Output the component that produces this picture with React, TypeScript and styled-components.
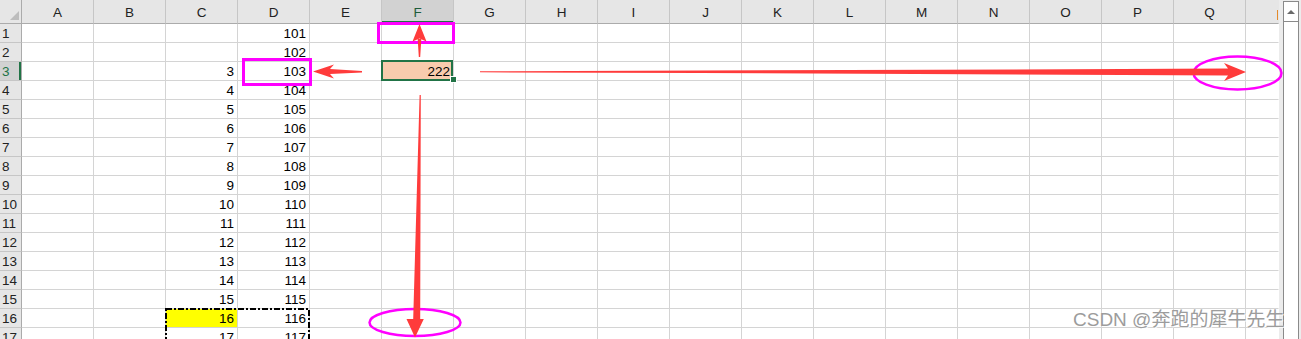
import React from 'react';
import styled, { createGlobalStyle, css } from 'styled-components';

const GlobalStyle = createGlobalStyle`
  html, body { margin: 0; padding: 0; background: #fff; }
  body { overflow: hidden; font-family: "Liberation Sans", Arial, sans-serif; }
`;

const COLS = 'ABCDEFGHIJKLMNOPQ'.split('');
const ROWS = Array.from({ length: 17 }, (_, i) => i + 1);
const GREEN = '#217346';

const Sheet = styled.div`
  position: relative;
  display: flex;
  width: 1301px;
  height: 339px;
  overflow: hidden;
`;

const Grid = styled.div`
  flex: none;
  width: 1279px;
  display: grid;
  grid-template-columns: 22px repeat(17, 72px) 33px;
  grid-template-rows: 24px;
  grid-auto-rows: 19px;
  align-content: start;
`;

const Corner = styled.div`
  position: relative;
  box-sizing: border-box;
  background: #e6e6e6;
  border-right: 1px solid #ababab;
  border-bottom: 1px solid #ababab;
  &::after {
    content: '';
    position: absolute;
    right: 2px;
    bottom: 3px;
    width: 0;
    height: 0;
    border-left: 9px solid transparent;
    border-bottom: 9px solid #bdbdbd;
  }
`;

const ColHeader = styled.div<{ $active?: boolean; $edge?: boolean }>`
  position: relative;
  box-sizing: border-box;
  background: ${(p) => (p.$active ? '#d2d2d2' : '#e6e6e6')};
  border-right: 1px solid ${(p) => (p.$edge ? 'transparent' : '#c6c6c6')};
  border-bottom: 1px solid #ababab;
  text-align: center;
  font-size: 13.5px;
  line-height: 26px;
  color: ${(p) => (p.$active ? '#1d5c3a' : '#222')};
  ${(p) =>
    p.$active &&
    css`
      box-shadow: inset 0 -2px 0 ${GREEN};
    `}
  ${(p) =>
    p.$edge &&
    css`
      &::after {
        content: '';
        position: absolute;
        right: 0;
        top: 10px;
        width: 1px;
        height: 10px;
        background: #e48a2a;
      }
    `}
`;

const RowHeader = styled.div<{ $active?: boolean }>`
  box-sizing: border-box;
  background: ${(p) => (p.$active ? '#d2d2d2' : '#e6e6e6')};
  border-right: 1px solid #ababab;
  border-bottom: 1px solid #c6c6c6;
  padding-left: 2px;
  font-size: 13.5px;
  line-height: 20px;
  color: ${(p) => (p.$active ? GREEN : '#222')};
  overflow: hidden;
  ${(p) =>
    p.$active &&
    css`
      box-shadow: inset -2px 0 0 ${GREEN};
    `}
`;

const Cell = styled.div<{ $fill?: string; $selected?: boolean; $edge?: boolean }>`
  position: relative;
  box-sizing: border-box;
  background: ${(p) => p.$fill || '#fff'};
  border-right: 1px solid ${(p) => (p.$edge ? 'transparent' : '#d4d4d4')};
  border-bottom: 1px solid #d4d4d4;
  padding-right: 3px;
  text-align: right;
  font-size: 13.5px;
  line-height: 20px;
  color: #000;
  white-space: nowrap;
  ${(p) =>
    p.$selected &&
    css`
      z-index: 1;
      &::before {
        content: '';
        position: absolute;
        left: -1px;
        top: -2px;
        right: 0;
        bottom: -1px;
        border: 2px solid ${GREEN};
      }
      &::after {
        content: '';
        position: absolute;
        right: -4px;
        bottom: -3px;
        width: 5px;
        height: 5px;
        background: ${GREEN};
        border: 1px solid #fff;
      }
    `}
`;

const ScrollArea = styled.div`
  flex: 1;
  display: flex;
  box-sizing: border-box;
  padding: 1px 2px 0 4px;
  background: #ececec;
`;

const Track = styled.div`
  flex: 1;
  display: flex;
  flex-direction: column;
  border: 1px solid #8a8a8a;
  border-bottom: none;
  background: #fff;
`;

const UpButton = styled.div`
  height: 19px;
  border-bottom: 1px solid #8a8a8a;
  display: flex;
  align-items: center;
  justify-content: center;
  &::before {
    content: '';
    width: 0;
    height: 0;
    border-left: 4px solid transparent;
    border-right: 4px solid transparent;
    border-bottom: 4px solid #6a6a6a;
  }
`;

const Overlay = styled.svg`
  position: absolute;
  left: 0;
  top: 0;
  width: 1301px;
  height: 339px;
  pointer-events: none;
  z-index: 2;
`;

const Watermark = styled.div`
  position: absolute;
  left: 1073px;
  top: 308px;
  z-index: 3;
  font-family: "Liberation Sans", "Noto Sans CJK SC", sans-serif;
  font-size: 19px;
  line-height: 24px;
  letter-spacing: 0;
  color: #9c9c9c;
  text-shadow: 0 0 1px #fff, 1px 1px 0 rgba(255, 255, 255, 0.8);
  white-space: nowrap;
`;

const cellValue = (row: number, col: string): string => {
  if (col === 'C' && row >= 3) return String(row);
  if (col === 'D') return String(100 + row);
  if (col === 'F' && row === 3) return '222';
  return '';
};

const RED = '#ff3b3b';
const MAGENTA = '#f0f';

export default function App() {
  return (
    <>
      <GlobalStyle />
      <Sheet>
        <Grid>
          <Corner />
          {COLS.map((c) => (
            <ColHeader key={c} $active={c === 'F'}>
              {c}
            </ColHeader>
          ))}
          <ColHeader $edge />
          {ROWS.map((r) => (
            <React.Fragment key={r}>
              <RowHeader $active={r === 3}>{r}</RowHeader>
              {COLS.map((c) => (
                <Cell
                  key={c}
                  $fill={c === 'C' && r === 16 ? '#ffff00' : c === 'F' && r === 3 ? '#f8cbad' : undefined}
                  $selected={c === 'F' && r === 3}
                >
                  {cellValue(r, c)}
                </Cell>
              ))}
              <Cell $edge />
            </React.Fragment>
          ))}
        </Grid>
        <ScrollArea>
          <Track>
            <UpButton />
          </Track>
        </ScrollArea>

        <Overlay viewBox="0 0 1301 339">
          {/* copy marquee around C16:D17 */}
          <rect x="166" y="309" width="143" height="60" fill="none" stroke="#000" strokeWidth="2" strokeDasharray="6 2 2 2" />

          {/* magenta frames */}
          <rect x="378.5" y="23.5" width="75" height="19" fill="none" stroke={MAGENTA} strokeWidth="3" />
          <rect x="243.5" y="59.5" width="67" height="25" fill="none" stroke={MAGENTA} strokeWidth="3" />
          <ellipse cx="1237.5" cy="73" rx="44" ry="16.5" fill="none" stroke={MAGENTA} strokeWidth="2.5" />
          <ellipse cx="415" cy="322.5" rx="45.5" ry="13.5" fill="none" stroke={MAGENTA} strokeWidth="2.5" />

          {/* up arrow */}
          <path d="M418.8,57 L420.2,57 L421.3,39 L417.7,39 Z" fill={RED} />
          <path d="M419.5,24 L426.5,41.5 L419.5,38.5 L412.5,41.5 Z" fill={RED} />

          {/* left arrow */}
          <path d="M313,71.5 L334,64.5 L330,69 L362,71 L362,72.5 L330,74 L334,78.5 Z" fill={RED} />

          {/* right arrow */}
          <path d="M480,71.3 L700,70.6 L1228,68.6 L1224,63 L1246,72 L1224,81 L1228,75.4 L700,73 L480,72.3 Z" fill={RED} />

          {/* down arrow */}
          <path d="M419.6,95 L420.8,95 L420.2,319 L423.8,319 L415,337.5 L406.5,319 L413.2,319 Z" fill={RED} />
        </Overlay>

        <Watermark>CSDN @奔跑的犀牛先生</Watermark>
      </Sheet>
    </>
  );
}
